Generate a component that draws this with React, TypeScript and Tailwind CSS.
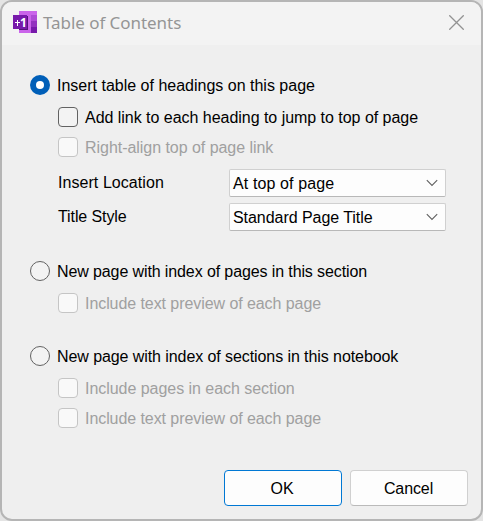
import type { ReactNode } from "react";

function Radio({ checked = false }: { checked?: boolean }) {
  return checked ? (
    <span className="flex size-5 shrink-0 items-center justify-center rounded-full bg-[#005fb8]">
      <span className="size-2 rounded-full bg-white" />
    </span>
  ) : (
    <span className="size-5 shrink-0 rounded-full border border-[#626262] bg-[#f3f3f3]" />
  );
}

interface RowProps {
  tracking?: string;
  children: ReactNode;
}

function RadioRow({ checked, tracking = "", children }: RowProps & { checked?: boolean }) {
  return (
    <div className="flex h-5 items-center gap-[7px] pl-7">
      <Radio checked={checked} />
      <span className={`pt-[2px] ${tracking}`}>{children}</span>
    </div>
  );
}

function CheckRow({ disabled = false, tracking = "", children }: RowProps & { disabled?: boolean }) {
  return (
    <div className="flex h-5 items-center gap-[7px] pl-14">
      <span
        className={
          disabled
            ? "size-5 shrink-0 rounded-[4px] border border-[#c5c5c5] bg-[#f9f9f9]"
            : "size-5 shrink-0 rounded-[4px] border border-[#626262] bg-[#f3f3f3]"
        }
      />
      <span className={`pt-[2px] ${tracking} ${disabled ? "text-[#a0a0a0]" : ""}`}>{children}</span>
    </div>
  );
}

interface SelectRowProps {
  label: string;
  value: string;
  labelTracking: string;
  valueTracking: string;
}

function SelectRow({ label, value, labelTracking, valueTracking }: SelectRowProps) {
  return (
    <div className="flex h-7 items-center pl-14">
      <span className={`w-[171px] ${labelTracking}`}>{label}</span>
      <div className="flex h-7 w-[217px] items-center justify-between rounded-[2px] border border-[#d0d0d0] border-b-[#b8b8b8] bg-[#fdfdfd] pr-[7px] pl-[3px]">
        <span className={`pt-[2px] ${valueTracking}`}>{value}</span>
        <svg width="12" height="8" viewBox="0 0 12 8" fill="none" stroke="#606060" strokeWidth="1.1">
          <path d="M0.8 1.2 6 6.4 11.2 1.2" />
        </svg>
      </div>
    </div>
  );
}

function AppIcon() {
  return (
    <svg width="24" height="22" viewBox="0 0 24 22" shapeRendering="crispEdges">
      <rect x="6" width="18" height="22" fill="#ca64ea" />
      <rect x="18" y="4" width="6" height="6" fill="#ae4bd5" />
      <rect x="18" y="10" width="6" height="6" fill="#9332bf" />
      <rect x="18" y="16" width="6" height="6" fill="#7719aa" />
      <rect x="6" y="5" width="9" height="14" fill="#55127a" />
      <rect y="4" width="14" height="14" fill="#7719aa" />
      <path d="M1.5 11.5h5.5M4.25 8.5v6" stroke="#fff" strokeWidth="1.3" fill="none" />
      <text x="7" y="15.5" fill="#fff" fontFamily="'Noto Sans', sans-serif" fontSize="12" fontWeight="700">
        1
      </text>
    </svg>
  );
}

export default function App() {
  return (
    <div className="h-[521px] w-[483px] bg-[#e4e4e4]">
      <div className="flex h-full flex-col overflow-hidden rounded-[12px] border-2 border-[#b5b5b5] bg-[#efefef] font-['Liberation_Sans',Arial,sans-serif] text-[16px] leading-5 whitespace-nowrap text-black">
        <header className="flex h-[43px] shrink-0 items-center justify-between bg-[#f3f3f3] pr-[17px] pb-[3px] pl-[11px]">
          <div className="flex items-center gap-[6px]">
            <AppIcon />
            <span className="pt-[2px] font-['Noto_Sans',sans-serif] text-[17px] tracking-[-0.05px] text-[#959595]">
              Table of Contents
            </span>
          </div>
          <svg className="mt-px" width="15" height="15" viewBox="0 0 15 15" fill="none" stroke="#929292" strokeWidth="1.3">
            <path d="m.3 .3 14.4 14.4m0-14.4-14.4 14.4" />
          </svg>
        </header>

        <section className="flex flex-col pt-[30px]">
          <RadioRow checked>Insert table of headings on this page</RadioRow>
          <div className="mt-3 flex flex-col gap-[10px]">
            <CheckRow tracking="tracking-[-0.03px]">Add link to each heading to jump to top of page</CheckRow>
            <CheckRow disabled tracking="tracking-[-0.04px]">Right-align top of page link</CheckRow>
          </div>
          <div className="mt-3 flex flex-col gap-[6px]">
            <SelectRow
              label="Insert Location"
              value="At top of page"
              labelTracking="tracking-[0.06px]"
              valueTracking="tracking-[0.12px]"
            />
            <SelectRow
              label="Title Style"
              value="Standard Page Title"
              labelTracking="tracking-[-0.1px]"
              valueTracking="tracking-[-0.05px]"
            />
          </div>
        </section>

        <section className="flex flex-col gap-3 pt-[30px]">
          <RadioRow tracking="tracking-[-0.11px]">New page with index of pages in this section</RadioRow>
          <CheckRow disabled tracking="tracking-[-0.07px]">Include text preview of each page</CheckRow>
        </section>

        <section className="flex flex-col pt-[33px]">
          <RadioRow tracking="tracking-[-0.08px]">New page with index of sections in this notebook</RadioRow>
          <div className="mt-3 flex flex-col gap-[10px]">
            <CheckRow disabled tracking="tracking-[-0.04px]">Include pages in each section</CheckRow>
            <CheckRow disabled tracking="tracking-[-0.07px]">Include text preview of each page</CheckRow>
          </div>
        </section>

        <footer className="mt-auto flex justify-end gap-2 pr-[13px] pb-[13px]">
          <button className="h-9 w-[118px] rounded-[4px] border border-[#0078d4] bg-[#fdfdfd] pt-[2px] pr-[2px]">OK</button>
          <button className="h-9 w-[118px] rounded-[4px] border border-[#d0d0d0] border-b-[#bababa] bg-[#fdfdfd] pt-[2px] pr-px tracking-[-0.1px]">
            Cancel
          </button>
        </footer>
      </div>
    </div>
  );
}
